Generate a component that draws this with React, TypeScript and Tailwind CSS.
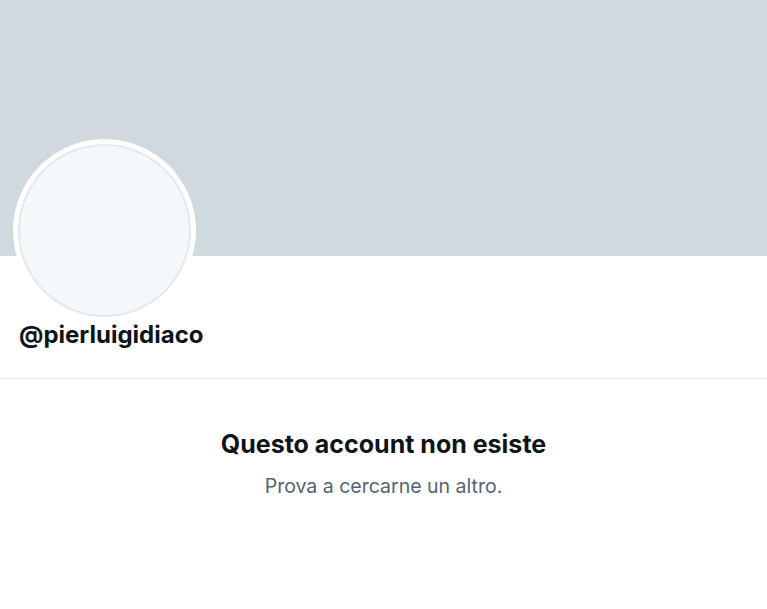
import React from "react";

export default function App() {
  return (
    <div className="w-[767px] h-[609px] bg-white overflow-hidden" style={{ fontFamily: "Inter, 'Noto Sans', sans-serif" }}>
      <div className="h-[256px] bg-[#cfd9de]" />
      <div className="px-[13px]">
        <div className="mt-[-117px] w-[183px] h-[183px] rounded-full bg-white p-[5px]">
          <div className="w-full h-full rounded-full bg-[#f5f8fa] border-2 border-[#e6e9eb]" />
        </div>
      </div>
      <div className="pl-[19px] h-[58px]">
        <div className="text-[24px] leading-[30px] font-bold text-[#0f1419] -mt-[2px]">@pierluigidiaco</div>
      </div>
      <div className="h-px bg-[#e6ebed]" />
      <div className="flex flex-col items-center pt-[50px]">
        <div className="text-[25px] leading-[30px] font-bold text-[#0f1419]">Questo account non esiste</div>
        <div className="mt-[15px] text-[19.5px] leading-[24px] text-[#536471]">Prova a cercarne un altro.</div>
      </div>
    </div>
  );
}
